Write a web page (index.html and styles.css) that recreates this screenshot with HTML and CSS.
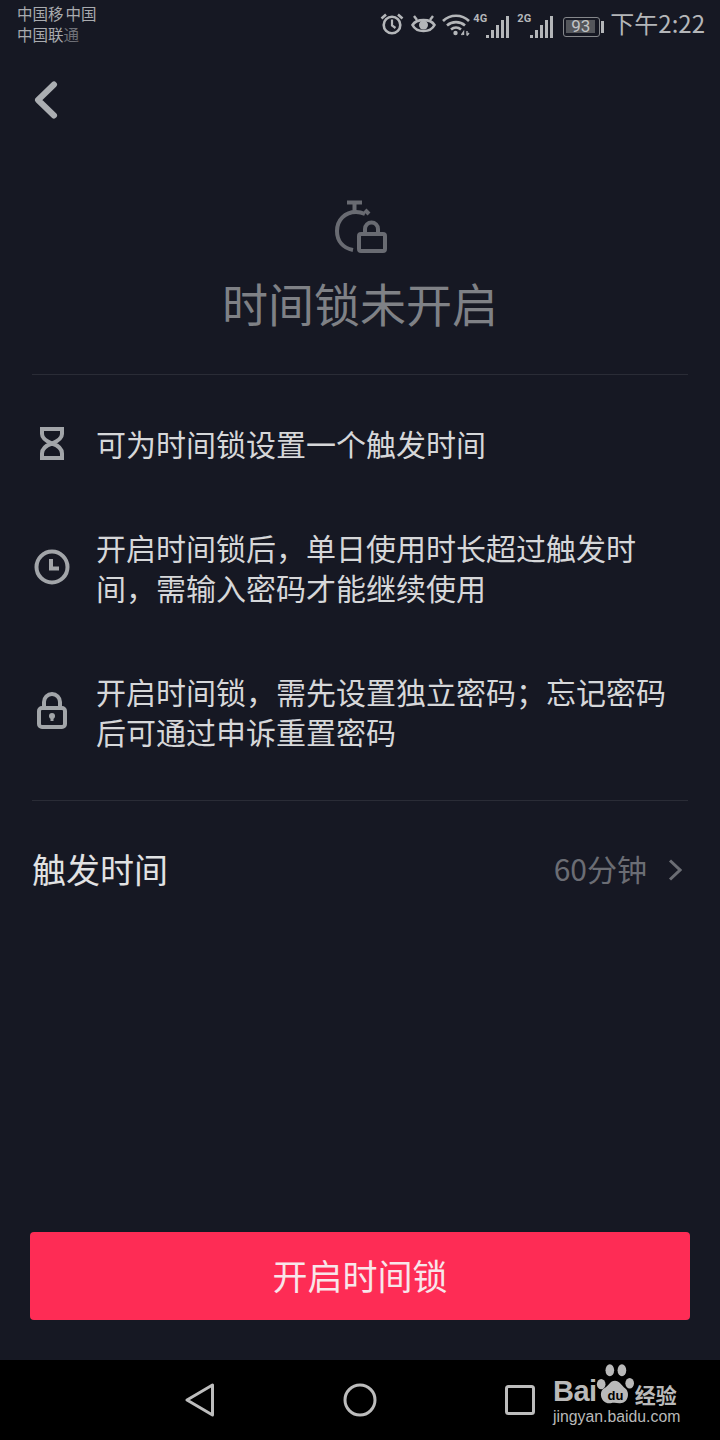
FILE: index.html
```html
<!DOCTYPE html>
<html lang="zh-CN">
<head>
<meta charset="utf-8">
<title>时间锁</title>
<link rel="stylesheet" href="styles.css">
</head>
<body>
<div class="page">
  <div class="status">
    <div class="carriers">
      <div class="carrier carrier-a">中国移<span class="overlap">中国</span></div>
      <div class="carrier carrier-b">中国联<span class="fade">通</span></div>
    </div>
    <div class="status-right">
      <svg class="si alarm" width="24" height="24" viewBox="0 0 24 24" fill="none" stroke="#b4b6b9" stroke-width="2.6"><circle cx="12" cy="13" r="8.300"/><path d="M12 7.500v6l3.500 2.500" stroke-width="2.200"/><path d="M1.500 6.500 6 2.500M22.500 6.500 18 2.500" stroke-width="2.600"/></svg>
      <svg class="si eye" width="25" height="24" viewBox="0 0 25 24" fill="none" stroke="#b4b6b9" stroke-width="2.600"><path d="M1.500 13c4-6.500 18-6.500 22 0-4 8-18 8-22 0z"/><circle cx="12.500" cy="13" r="4.500" fill="#b4b6b9" stroke="none"/><path d="M3 4l3 4M22 4l-3 4" stroke-width="2.400"/></svg>
      <svg class="si wifi" width="28" height="24" viewBox="0 0 28 24" fill="none" stroke="#b4b6b9" stroke-width="2.600"><path d="M1 9c7-7 19-7 26 0M5 13.500c5-4.500 13-4.500 18 0M9 17.500c3-2.500 7-2.500 10 0"/><circle cx="13.500" cy="21" r="2.200" fill="#b4b6b9" stroke="none"/><path d="M19.500 23l2-3v3M25 19v4.500M27 21l-2 2.500" stroke-width="1.400"/></svg>
      <div class="signal">
        <span class="sig-label">4G</span>
        <span class="bars"><i class="b1"></i><i class="b2"></i><i class="b3"></i><i class="b4"></i><i class="b5"></i></span>
      </div>
      <div class="signal signal-2">
        <span class="sig-label">2G</span>
        <span class="bars"><i class="b1"></i><i class="b2"></i><i class="b3"></i><i class="b4"></i><i class="b5"></i></span>
      </div>
      <div class="battery"><div class="battery-body"><span class="battery-fill">93</span></div><div class="battery-tip"></div></div>
      <div class="clock">下午2:22</div>
    </div>
  </div>

  <div class="topbar">
    <svg width="26" height="38" viewBox="0 0 26 38" fill="none" stroke="#abaeb2" stroke-width="6" stroke-linecap="round" stroke-linejoin="round"><path d="M21 3.500 5 19l16 15.500"/></svg>
  </div>

  <div class="hero">
    <svg class="hero-icon" width="54" height="54" viewBox="0 0 54 54" fill="none" stroke="#696b72" stroke-width="4"><path d="M13 2.500h15M20.500 3v8"/><path d="M31 10l4 4"/><path d="M19 50C9 48 3 41 3 31c0-11 8-19 19-19 3 0 6 .7 9 2"/><path d="M31 35v-6a6.500 6.500 0 0 1 13 0v6" /><rect x="25" y="34" width="26" height="17" rx="2"/></svg>
    <h1 class="hero-title">时间锁未开启</h1>
  </div>

  <div class="rule"></div>

  <ul class="features">
    <li class="feature f1">
      <span class="fi-col"><svg width="24" height="33" viewBox="0 0 24 33" fill="none" stroke="#a2a5a9" stroke-width="4"><path d="M2 2h20v5c0 4-4 7-10 9.500C6 14 2 11 2 7z"/><path d="M12 16.500C6 18.500 2 22 2 26.500V31h20v-4.500c0-4.500-4-8-10-10z"/></svg></span>
      <p>可为时间锁设置一个触发时间</p>
    </li>
    <li class="feature f2">
      <span class="fi-col"><svg width="36" height="36" viewBox="0 0 36 36" fill="none" stroke="#a2a5a9" stroke-width="4"><circle cx="18" cy="18" r="15.500"/><path d="M17 10v9.500h8"/></svg></span>
      <p>开启时间锁后，单日使用时长超过触发时间，需输入密码才能继续使用</p>
    </li>
    <li class="feature f3">
      <span class="fi-col"><svg class="lock" width="30" height="37" viewBox="0 0 30 37" fill="none" stroke="#a2a5a9" stroke-width="4"><path d="M7 18V10a8 8 0 0 1 16 0v8"/><rect x="2" y="16" width="26" height="19" rx="3"/><path d="M15 24v5" stroke-width="3"/><circle cx="15" cy="24" r="3" fill="#a2a5a9" stroke="none"/></svg></span>
      <p>开启时间锁，需先设置独立密码；忘记密码后可通过申诉重置密码</p>
    </li>
  </ul>

  <div class="rule"></div>

  <div class="trigger">
    <span class="trigger-label">触发时间</span>
    <span class="trigger-value">60分钟</span>
    <svg class="chev" width="14" height="22" viewBox="0 0 14 22" fill="none" stroke="#6b6d74" stroke-width="3"><path d="M2 1.500 12 11 2 20.500"/></svg>
  </div>

  <div class="spacer"></div>

  <div class="cta-wrap"><button class="cta">开启时间锁</button></div>

  <nav class="navbar">
    <svg class="nav-back" width="30" height="34" viewBox="0 0 30 34" fill="none" stroke="#bdbdbd" stroke-width="3" stroke-linejoin="round"><path d="M27.500 2v30L2 17z"/></svg>
    <svg class="nav-home" width="34" height="34" viewBox="0 0 34 34" fill="none" stroke="#bdbdbd" stroke-width="3"><circle cx="17" cy="17" r="15"/></svg>
    <svg class="nav-recent" width="30" height="30" viewBox="0 0 30 30" fill="none" stroke="#bdbdbd" stroke-width="3"><rect x="1.500" y="1.500" width="27" height="27" rx="2"/></svg>
    <div class="watermark">
      <div class="wm-top">
        <span class="wm-bai">Bai</span>
        <svg class="wm-paw" width="38" height="42" viewBox="0 0 44 48" fill="#b9b9b9"><ellipse cx="6" cy="23" rx="5" ry="6"/><ellipse cx="16" cy="7" rx="5" ry="7"/><ellipse cx="30" cy="7" rx="5" ry="7"/><ellipse cx="39" cy="22" rx="5" ry="6"/><path d="M22 19c5 0 7 5 12 9 6 5 3 18-7 17-3-.5-7-1-10 0-10 2-15-12-8-17 6-3 7-9 13-9z"/><text class="wm-du" x="22.500" y="41" text-anchor="middle">du</text></svg>
        <span class="wm-cn">经验</span>
      </div>
      <div class="wm-url">jingyan.baidu.com</div>
    </div>
  </nav>
</div>
</body>
</html>
```
FILE: styles.css
```css
* { box-sizing: border-box; }
html, body { margin: 0; padding: 0; }
body { background: #161823; font-family: "Noto Sans CJK SC", "Noto Sans", sans-serif; }
.page { width: 720px; height: 1440px; display: flex; flex-direction: column; overflow: hidden; background: #161823; }

.status { height: 50px; flex: none; display: flex; justify-content: space-between; padding: 3px 15px 0 17px; }
.carriers { display: flex; flex-direction: column; font-size: 15.500px; line-height: 21px; color: #a9abaf; }
.carrier { white-space: nowrap; }
.overlap { margin-left: 2px; }
.fade { opacity: .6; }
.status-right { display: flex; align-items: flex-start; padding-top: 9px; color: #b4b6b9; }
.si { flex: none; display: block; }
.alarm { margin-right: 7px; }
.eye { margin-right: 6px; }
.wifi { margin-right: 3px; }
.signal { position: relative; width: 36px; height: 24px; margin-right: 8px; }
.signal-2 { margin-right: 10px; }
.sig-label { position: absolute; left: 0; top: 1px; font-family: "Roboto", sans-serif; font-size: 11px; line-height: 12px; font-weight: 700; color: #b4b6b9; }
.bars { position: absolute; right: 0; bottom: -2px; display: flex; align-items: flex-end; gap: 2px; }
.bars i { display: block; width: 3px; background: #b4b6b9; }
.b1 { height: 3px; } .b2 { height: 8px; } .b3 { height: 13px; } .b4 { height: 18px; } .b5 { height: 22px; }
.battery { display: flex; align-items: center; height: 20px; margin-top: 5px; margin-right: 6px; }
.battery-body { width: 37px; height: 20px; border: 1.500px solid #85878b; border-radius: 3px; padding: 2px; }
.battery-fill { display: block; width: 29px; height: 13px; background: #54565b; color: #c2c4c6; font-family: "Roboto", sans-serif; font-size: 17px; line-height: 13px; text-align: center; }
.battery-tip { width: 3px; height: 12px; background: #b4b6b9; margin-left: 1px; }
.clock { font-size: 24px; line-height: 32px; margin-top: -5px; color: #b4b6b9; white-space: nowrap; }

.topbar { height: 68px; flex: none; padding: 31px 0 0 33px; }
.topbar svg { display: block; }

.hero { flex: none; height: 256px; display: flex; flex-direction: column; align-items: center; padding-top: 82px; }
.hero-icon { display: block; margin-left: 2px; }
.hero-title { margin: 18px 0 0; font-size: 46px; line-height: 60px; font-weight: 400; color: #7f8186; }

.rule { flex: none; height: 1px; margin: 0 32px; background: #2a2c36; }

.features { list-style: none; margin: 0; padding: 48px 40px 48px 32px; flex: none; height: 425px; display: flex; flex-direction: column; gap: 64px; }
.feature { display: flex; align-items: center; gap: 24px; flex: none; }
.fi-col { flex: none; width: 40px; display: flex; justify-content: center; }
.fi-col svg { display: block; }
.fi-col .lock { margin-top: -1px; }
.feature p { margin: 0; font-size: 30px; line-height: 40px; color: #d6d7d9; }

.trigger { flex: none; height: 136px; display: flex; align-items: center; padding: 0 38px 0 32px; }
.trigger-label { font-size: 34px; line-height: 44px; color: #e1e2e3; flex: 1; }
.trigger-value { font-size: 30px; line-height: 40px; color: #6b6d74; margin: -2px 21px 0 0; }
.chev { display: block; margin-top: 2px; }

.spacer { flex: 1; }

.cta-wrap { flex: none; padding: 0 30px 40px; }
.cta { display: block; width: 100%; height: 88px; padding: 0 0 4px; border: 0; border-radius: 4px; background: #fe2c55; color: #f8e6ea; font-family: inherit; font-size: 35px; }

.navbar { flex: none; height: 80px; background: #000; position: relative; display: flex; align-items: center; padding-left: 185px; }
.nav-back { margin-right: 128px; flex: none; }
.nav-home { margin-right: 128px; flex: none; }
.nav-recent { flex: none; }
.watermark { position: absolute; left: 553px; top: 3px; width: 140px; color: #b9b9b9; }
.wm-top { display: flex; align-items: flex-end; height: 45px; }
.wm-bai { font-family: "Liberation Sans", sans-serif; font-weight: 700; font-size: 29px; line-height: 30px; margin-bottom: 2px; letter-spacing: -.5px; }
.wm-paw { margin: 0 0 2px -1px; flex: none; display: block; }
.wm-du { font-family: "Liberation Sans", sans-serif; font-weight: 700; font-size: 15px; fill: #000; }
.wm-cn { font-size: 21px; line-height: 28px; font-weight: 700; margin-left: 1px; white-space: nowrap; }
.wm-url { font-family: "Liberation Sans", sans-serif; font-size: 15.800px; line-height: 18px; margin-top: 0; white-space: nowrap; }
```
